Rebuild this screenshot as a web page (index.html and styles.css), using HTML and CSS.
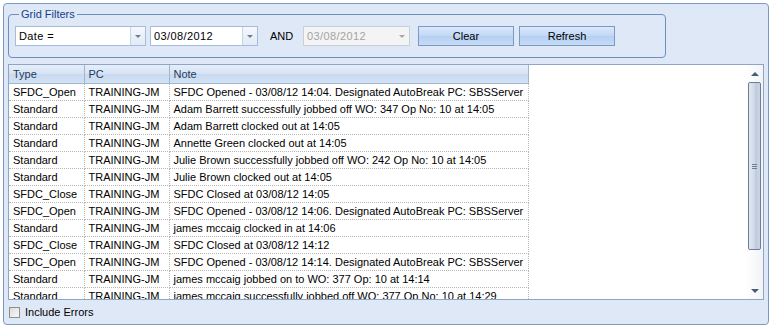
FILE: index.html
```html
<!DOCTYPE html>
<html lang="en">
<head>
  <meta charset="UTF-8" />
  <title>Grid Filters</title>
  <link rel="stylesheet" href="styles.css">
</head>
<body>
  <div class="panel">
    <fieldset class="filters">
      <legend>Grid Filters</legend>
      <div class="combo combo-field">
        <span class="value">Date =</span>
        <span class="drop"><span class="arrow"></span></span>
      </div>
      <div class="combo combo-date">
        <span class="value">03/08/2012</span>
        <span class="drop"><span class="arrow"></span></span>
      </div>
      <span class="and">AND</span>
      <div class="combo combo-date disabled">
        <span class="value">03/08/2012</span>
        <span class="drop"><span class="arrow"></span></span>
      </div>
      <button class="btn btn-clear">Clear</button>
      <button class="btn btn-refresh">Refresh</button>
    </fieldset>

    <div class="grid">
      <div class="grid-body">
        <table class="rows">
          <colgroup>
            <col class="c-type"><col class="c-pc"><col class="c-note">
          </colgroup>
          <thead>
            <tr><th>Type</th><th>PC</th><th>Note</th></tr>
          </thead>
          <tbody>
            <tr><td>SFDC_Open</td><td>TRAINING-JM</td><td>SFDC Opened - 03/08/12 14:04. Designated AutoBreak PC: SBSServer</td></tr>
            <tr><td>Standard</td><td>TRAINING-JM</td><td>Adam Barrett successfully jobbed off WO: 347 Op No: 10 at 14:05</td></tr>
            <tr><td>Standard</td><td>TRAINING-JM</td><td>Adam Barrett clocked out at 14:05</td></tr>
            <tr><td>Standard</td><td>TRAINING-JM</td><td>Annette Green clocked out at 14:05</td></tr>
            <tr><td>Standard</td><td>TRAINING-JM</td><td>Julie Brown successfully jobbed off WO: 242 Op No: 10 at 14:05</td></tr>
            <tr><td>Standard</td><td>TRAINING-JM</td><td>Julie Brown clocked out at 14:05</td></tr>
            <tr><td>SFDC_Close</td><td>TRAINING-JM</td><td>SFDC Closed at 03/08/12 14:05</td></tr>
            <tr><td>SFDC_Open</td><td>TRAINING-JM</td><td>SFDC Opened - 03/08/12 14:06. Designated AutoBreak PC: SBSServer</td></tr>
            <tr><td>Standard</td><td>TRAINING-JM</td><td>james mccaig clocked in at 14:06</td></tr>
            <tr><td>SFDC_Close</td><td>TRAINING-JM</td><td>SFDC Closed at 03/08/12 14:12</td></tr>
            <tr><td>SFDC_Open</td><td>TRAINING-JM</td><td>SFDC Opened - 03/08/12 14:14. Designated AutoBreak PC: SBSServer</td></tr>
            <tr><td>Standard</td><td>TRAINING-JM</td><td>james mccaig jobbed on to WO: 377 Op: 10 at 14:14</td></tr>
            <tr><td>Standard</td><td>TRAINING-JM</td><td>james mccaig successfully jobbed off WO: 377 Op No: 10 at 14:29</td></tr>
          </tbody>
        </table>
        <div class="header-fill"></div>
      </div>
      <div class="scrollbar">
        <span class="sb-up"></span>
        <span class="sb-thumb"><span class="grip"></span></span>
        <span class="sb-down"></span>
      </div>
    </div>

    <label class="check">
      <span class="box"></span>
      Include Errors
    </label>
  </div>
</body>
</html>
```

FILE: styles.css
```css
body {
  margin: 0;
  background-color: #ffffff;
  font-family: "Liberation Sans", Arial, sans-serif;
  font-size: 11px;
  color: #000;
}

.panel {
  margin: 3px 2px 3px 3px;
  height: 322px;
  box-sizing: border-box;
  border: 1px solid #7b9ac3;
  border-radius: 4px;
  background-color: #dfe8f6;
  padding: 0 4px 0 4px;
  display: flex;
  flex-direction: column;
}

.filters {
  margin: 5px 0 0 0;
  width: 658px;
  height: 49px;
  box-sizing: border-box;
  border: 1px solid #6d8fc0;
  border-radius: 4px;
  padding: 6px 0 0 6px;
  display: flex;
  align-items: center;
}

.filters legend {
  margin-left: 4px;
  padding: 0 2px;
  color: #15428b;
  font-size: 11px;
  line-height: 11px;
}

.combo {
  height: 20px;
  box-sizing: border-box;
  border: 1px solid #a5bcdb;
  background-color: #fff;
  display: flex;
  align-items: center;
}

.combo .value {
  flex: 1;
  padding-left: 3px;
  font-size: 11px;
  letter-spacing: 0.4px;
}

.combo .drop {
  width: 15px;
  height: 18px;
  box-sizing: border-box;
  border-left: 1px solid #c5d5ea;
  background: linear-gradient(#f5f8fd, #e2eaf5);
  display: flex;
  align-items: center;
  justify-content: center;
}

.arrow {
  width: 0;
  height: 0;
  border-left: 3px solid transparent;
  border-right: 3px solid transparent;
  border-top: 3px solid #6a7f9c;
}

.combo-field {
  width: 131px;
}

.combo-date {
  width: 108px;
  margin-left: 4px;
}

.combo.disabled {
  width: 107px;
  margin-left: 0;
  border-color: #c7cfd9;
  background-color: #f4f4f4;
}

.combo.disabled .value {
  color: #a3a3a3;
}

.combo.disabled .drop {
  background: #f4f4f4;
  border-left-color: transparent;
}

.combo.disabled .arrow {
  border-top-color: #a6a6a6;
}

.and {
  width: 33px;
  padding-left: 12px;
  font-size: 11px;
}

.btn {
  height: 20px;
  width: 96px;
  border: 1px solid #7b9ac3;
  border-radius: 0;
  background: linear-gradient(#d9e8fb, #c1d8f6 50%, #b6cff2 51%, #c6dbf6);
  font-family: "Liberation Sans", Arial, sans-serif;
  font-size: 11px;
  color: #000;
  padding: 0;
}

.btn-clear {
  margin-left: 8px;
}

.btn-refresh {
  margin-left: 5px;
}

.grid {
  margin-top: 6px;
  height: 234px;
  border: 1px solid #8ea6c4;
  background-color: #fff;
  display: flex;
  overflow: hidden;
}

.grid-body {
  flex: 1;
  display: flex;
  align-items: flex-start;
  overflow: hidden;
}

.rows {
  border-collapse: collapse;
  table-layout: fixed;
  width: 519px;
  font-size: 11px;
}

.c-type { width: 75px; }
.c-pc { width: 85px; }
.c-note { width: 359px; }

.rows th {
  height: 18px;
  padding: 0 0 0 4px;
  text-align: left;
  font-weight: normal;
  color: #1e395b;
  background: linear-gradient(#e6eef9, #d6e3f4 50%, #c9daf0 51%, #d3e1f3);
  border-right: 1px solid #9eb6d4;
  border-bottom: 1px solid #9eb6d4;
}

.rows td {
  height: 16px;
  padding: 0 0 0 4px;
  border-right: 1px dotted #b7b7b7;
  border-bottom: 1px dotted #b7b7b7;
  white-space: nowrap;
  overflow: hidden;
}

.header-fill {
  flex: 1;
  height: 19px;
}

.scrollbar {
  width: 17px;
  display: flex;
  flex-direction: column;
  align-items: center;
  background: linear-gradient(90deg, #ffffff, #f1f3f6);
}

.sb-up,
.sb-down {
  height: 17px;
  width: 17px;
  display: flex;
  align-items: center;
  justify-content: center;
}

.sb-up::before {
  content: "";
  border-left: 4px solid transparent;
  border-right: 4px solid transparent;
  border-bottom: 4px solid #4a5a73;
}

.sb-down::before {
  content: "";
  border-left: 4px solid transparent;
  border-right: 4px solid transparent;
  border-top: 4px solid #4a5a73;
}

.sb-thumb {
  width: 13px;
  height: 168px;
  box-sizing: border-box;
  border: 1px solid #6d7d95;
  border-radius: 2px;
  background: linear-gradient(90deg, #e3e9f1, #cfd9e6 50%, #bccade 51%, #c9d5e4);
  display: flex;
  align-items: center;
  justify-content: center;
}

.grip {
  width: 5px;
  height: 5px;
  background: repeating-linear-gradient(#6f7f96 0 1px, transparent 1px 2px);
}

.sb-down {
  margin-top: auto;
}

.check {
  margin-top: 6px;
  display: flex;
  align-items: center;
  gap: 5px;
  font-size: 11px;
  color: #000;
}

.check .box {
  width: 11px;
  height: 11px;
  box-sizing: border-box;
  border: 1px solid #8e8f8f;
  background: linear-gradient(135deg, #dcdcdc, #f8f8f8);
  margin-left: 1px;
}
```
